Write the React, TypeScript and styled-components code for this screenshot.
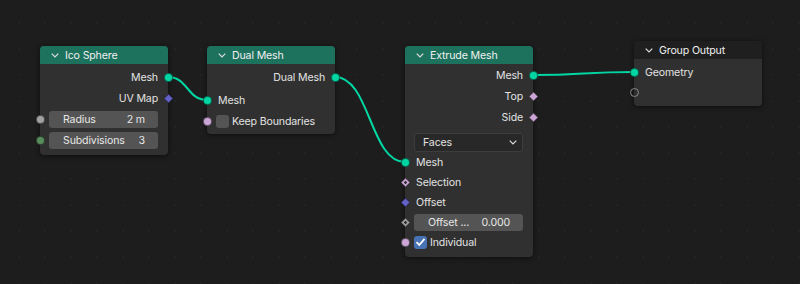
import styled, { createGlobalStyle } from 'styled-components';

const GlobalStyle = createGlobalStyle`
  html, body {
    margin: 0;
    padding: 0;
    background: #1d1d1d;
  }
  body {
    font-family: Inter, 'DejaVu Sans', sans-serif;
    font-size: 10.6px;
    letter-spacing: -0.15px;
    color: #e2e2e2;
  }
`;

type SocketKind = 'circle' | 'diamond' | 'diamondDot' | 'hollow';

const Canvas = styled.div`
  position: relative;
  width: 800px;
  height: 284px;
  overflow: hidden;
  background-color: #1d1d1d;
  background-image: radial-gradient(circle, #232323 0.8px, transparent 1.2px);
  background-size: 26px 26px;
  background-position: 6px 10px;
`;

const Links = styled.svg`
  position: absolute;
  left: 0;
  top: 0;
  width: 800px;
  height: 284px;
`;

const Node = styled.div<{ $x: number; $y: number }>`
  position: absolute;
  left: ${({ $x }) => $x}px;
  top: ${({ $y }) => $y}px;
  width: 128px;
  background: #303030;
  border-radius: 4px;
  box-shadow: 0 1px 5px rgba(0, 0, 0, 0.55);
`;

const Header = styled.div<{ $color: string }>`
  display: flex;
  align-items: center;
  gap: 6px;
  height: 18px;
  padding-left: 11px;
  background: ${({ $color }) => $color};
  border-radius: 4px 4px 0 0;
  color: #f0f0f0;
`;

const Body = styled.div<{ $pt: number; $pb: number }>`
  display: flex;
  flex-direction: column;
  padding: ${({ $pt, $pb }) => `${$pt}px 0 ${$pb}px`};
`;

const Row = styled.div<{ $out?: boolean; $h?: number; $mt?: number }>`
  position: relative;
  display: flex;
  align-items: center;
  justify-content: ${({ $out }) => ($out ? 'flex-end' : 'flex-start')};
  gap: 3px;
  height: ${({ $h }) => $h ?? 20}px;
  margin-top: ${({ $mt }) => $mt ?? 0}px;
  padding: 0 10px 0 ${({ $out }) => ($out ? 10 : 11)}px;
`;

const FieldRow = styled(Row)`
  padding: 0 10px 0 9px;
`;

const Socket = styled.span<{ $color: string; $kind: SocketKind; $out?: boolean }>`
  position: absolute;
  top: 50%;
  ${({ $out }) => ($out ? 'right: -4.5px;' : 'left: -4.5px;')}
  box-sizing: border-box;
  width: 9px;
  height: 9px;
  margin-top: -4.5px;
  background: ${({ $color, $kind }) => ($kind === 'hollow' ? 'transparent' : $color)};
  border: ${({ $kind }) => ($kind === 'hollow' ? '1.2px solid #8a8a8a' : '1px solid rgba(0,0,0,0.5)')};
  border-radius: ${({ $kind }) => ($kind === 'circle' || $kind === 'hollow' ? '50%' : '1px')};
  transform: ${({ $kind }) =>
    $kind === 'diamond' || $kind === 'diamondDot' ? 'rotate(45deg) scale(0.78)' : 'none'};
  &::after {
    content: '';
    display: ${({ $kind }) => ($kind === 'diamondDot' ? 'block' : 'none')};
    position: absolute;
    left: 50%;
    top: 50%;
    width: 3px;
    height: 3px;
    margin: -1.5px 0 0 -1.5px;
    background: #262626;
  }
`;

const Slider = styled.div`
  flex: 1;
  display: flex;
  align-items: center;
  justify-content: space-between;
  height: 17px;
  padding: 0 13px 0 14px;
  background: #545454;
  border-radius: 3px;
  color: #e6e6e6;
`;

const Dropdown = styled.div`
  flex: 1;
  display: flex;
  align-items: center;
  justify-content: space-between;
  box-sizing: border-box;
  height: 19px;
  padding: 0 5px 0 8px;
  background: #282828;
  border: 1px solid #3d3d3d;
  border-radius: 3px;
`;

const Check = styled.span<{ $on?: boolean }>`
  display: flex;
  align-items: center;
  justify-content: center;
  width: 13px;
  height: 13px;
  margin-left: -2px;
  border-radius: 3px;
  background: ${({ $on }) => ($on ? '#4772b3' : '#545454')};
`;

const Chevron = ({ color = '#dcdcdc' }: { color?: string }) => (
  <svg width="8" height="5" viewBox="0 0 8 5">
    <polyline points="0.7,0.7 4,4 7.3,0.7" fill="none" stroke={color} strokeWidth="1.2" />
  </svg>
);

const Tick = () => (
  <svg width="11" height="10" viewBox="0 0 11 10">
    <polyline points="1.5,5.2 4.3,8 9.5,1.8" fill="none" stroke="#fff" strokeWidth="1.8" />
  </svg>
);

const MESH = '#00d6a3';
const VECTOR = '#6363c7';
const FLOAT = '#a1a1a1';
const INT = '#598c5c';
const BOOL = '#cca6d6';
const TEAL = '#1d725e';

function link(x1: number, y1: number, x2: number, y2: number) {
  const d = Math.max(Math.abs(x2 - x1) * 0.5, 20);
  return `M${x1},${y1} C${x1 + d},${y1} ${x2 - d},${y2} ${x2},${y2}`;
}

export default function App() {
  return (
    <>
      <GlobalStyle />
      <Canvas>
        <Links viewBox="0 0 800 284">
          {[
            link(168, 77, 207, 100),
            link(335, 77, 405, 162),
            link(533, 75, 634, 72),
          ].map((d) => (
            <path key={d} d={d} fill="none" stroke={MESH} strokeWidth="2" />
          ))}
        </Links>

        <Node $x={40} $y={46}>
          <Header $color={TEAL}>
            <Chevron />
            Ico Sphere
          </Header>
          <Body $pt={3} $pb={4}>
            <Row $out $h={21}>
              Mesh
              <Socket $out $kind="circle" $color={MESH} />
            </Row>
            <Row $out $h={21}>
              UV Map
              <Socket $out $kind="diamond" $color={VECTOR} />
            </Row>
            <FieldRow $h={21}>
              <Socket $kind="circle" $color={FLOAT} />
              <Slider>
                <span>Radius</span>
                <span>2 m</span>
              </Slider>
            </FieldRow>
            <FieldRow $h={21}>
              <Socket $kind="circle" $color={INT} />
              <Slider>
                <span>Subdivisions</span>
                <span>3</span>
              </Slider>
            </FieldRow>
          </Body>
        </Node>

        <Node $x={207} $y={46}>
          <Header $color={TEAL}>
            <Chevron />
            Dual Mesh
          </Header>
          <Body $pt={3} $pb={3}>
            <Row $out $h={21}>
              Dual Mesh
              <Socket $out $kind="circle" $color={MESH} />
            </Row>
            <Row $h={21} $mt={2}>
              <Socket $kind="circle" $color={MESH} />
              Mesh
            </Row>
            <Row $h={20}>
              <Socket $kind="circle" $color={BOOL} />
              <Check />
              Keep Boundaries
            </Row>
          </Body>
        </Node>

        <Node $x={405} $y={46}>
          <Header $color={TEAL}>
            <Chevron />
            Extrude Mesh
          </Header>
          <Body $pt={1} $pb={5}>
            <Row $out $h={21}>
              Mesh
              <Socket $out $kind="circle" $color={MESH} />
            </Row>
            <Row $out $h={21}>
              Top
              <Socket $out $kind="diamond" $color={BOOL} />
            </Row>
            <Row $out $h={20}>
              Side
              <Socket $out $kind="diamond" $color={BOOL} />
            </Row>
            <FieldRow $h={20} $mt={5}>
              <Dropdown>
                <span>Faces</span>
                <Chevron />
              </Dropdown>
            </FieldRow>
            <Row>
              <Socket $kind="circle" $color={MESH} />
              Mesh
            </Row>
            <Row>
              <Socket $kind="diamondDot" $color={BOOL} />
              Selection
            </Row>
            <Row>
              <Socket $kind="diamond" $color={VECTOR} />
              Offset
            </Row>
            <FieldRow>
              <Socket $kind="diamondDot" $color={FLOAT} />
              <Slider>
                <span>Offset ...</span>
                <span>0.000</span>
              </Slider>
            </FieldRow>
            <Row>
              <Socket $kind="circle" $color={BOOL} />
              <Check $on>
                <Tick />
              </Check>
              Individual
            </Row>
          </Body>
        </Node>

        <Node $x={634} $y={41}>
          <Header $color="#1f1f1f">
            <Chevron />
            Group Output
          </Header>
          <Body $pt={3} $pb={4}>
            <Row>
              <Socket $kind="circle" $color={MESH} />
              Geometry
            </Row>
            <Row>
              <Socket $kind="hollow" $color="#8a8a8a" />
            </Row>
          </Body>
        </Node>
      </Canvas>
    </>
  );
}
